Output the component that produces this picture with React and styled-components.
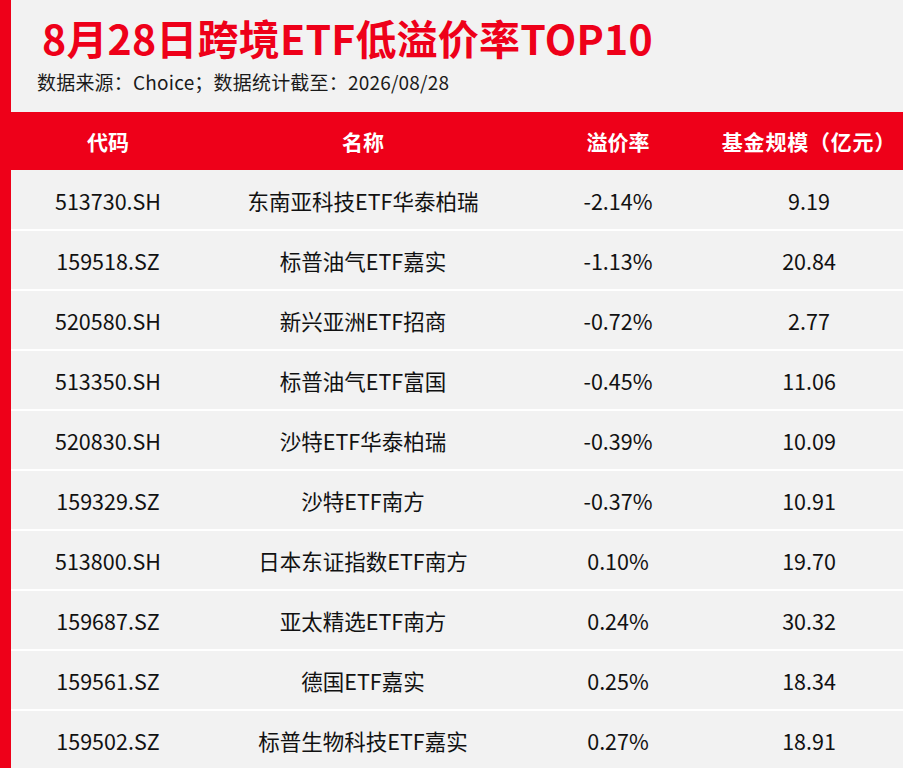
import React from 'react'
import styled, { createGlobalStyle } from 'styled-components'

const RED = '#ee0019'

const GlobalStyle = createGlobalStyle`
	html, body {
		margin: 0;
		padding: 0;
		background: #f2f2f2;
		overflow: hidden;
	}
	body {
		font-family: "Noto Sans CJK SC", "Noto Sans", sans-serif;
	}
`

const Page = styled.div`
	min-height: 768px;
	border-left: 11px solid ${RED};
	background: #f2f2f2;
`

const Heading = styled.div`
	padding: 11px 0 0 26px;
	height: 112px;
	box-sizing: border-box;
`

const Title = styled.h1`
	margin: 0 0 0 5px;
	font-size: 41px;
	line-height: 52px;
	font-weight: 700;
	color: ${RED};
	letter-spacing: 0.2px;
`

const Source = styled.p`
	margin: 4px 0 0 0;
	font-size: 19px;
	line-height: 30px;
	color: #1a1a1a;
	letter-spacing: 0.2px;
`

const Table = styled.div`
	display: grid;
	grid-template-columns: 194px 316px 194px 1fr;
`

const HeadCell = styled.div`
	height: 58px;
	background: ${RED};
	color: #fff;
	font-size: 21px;
	font-weight: 700;
	display: flex;
	align-items: center;
	justify-content: center;
	margin-bottom: 1px;
	letter-spacing: ${p => (p.$wide ? '0.8px' : '0')};
`

const Cell = styled.div`
	height: 58px;
	border-bottom: 2px solid #fff;
	display: flex;
	align-items: center;
	justify-content: center;
	font-size: 21.5px;
	color: #111;
`

const rows = [
	['513730.SH', '东南亚科技ETF华泰柏瑞', '-2.14%', '9.19'],
	['159518.SZ', '标普油气ETF嘉实', '-1.13%', '20.84'],
	['520580.SH', '新兴亚洲ETF招商', '-0.72%', '2.77'],
	['513350.SH', '标普油气ETF富国', '-0.45%', '11.06'],
	['520830.SH', '沙特ETF华泰柏瑞', '-0.39%', '10.09'],
	['159329.SZ', '沙特ETF南方', '-0.37%', '10.91'],
	['513800.SH', '日本东证指数ETF南方', '0.10%', '19.70'],
	['159687.SZ', '亚太精选ETF南方', '0.24%', '30.32'],
	['159561.SZ', '德国ETF嘉实', '0.25%', '18.34'],
	['159502.SZ', '标普生物科技ETF嘉实', '0.27%', '18.91'],
]

const heads = ['代码', '名称', '溢价率', '基金规模（亿元）']

const App = () => {
	return (
		<Page>
			<GlobalStyle />
			<Heading>
				<Title>8月28日跨境ETF低溢价率TOP10</Title>
				<Source>数据来源：Choice；数据统计截至：2026/08/28</Source>
			</Heading>
			<Table>
				{heads.map((h, i) => (
					<HeadCell key={h} $wide={i === 3}>{h}</HeadCell>
				))}
				{rows.map((r, i) =>
					r.map((c, j) => (
						<Cell key={i + '-' + j}>{c}</Cell>
					))
				)}
			</Table>
		</Page>
	)
}

export default App
